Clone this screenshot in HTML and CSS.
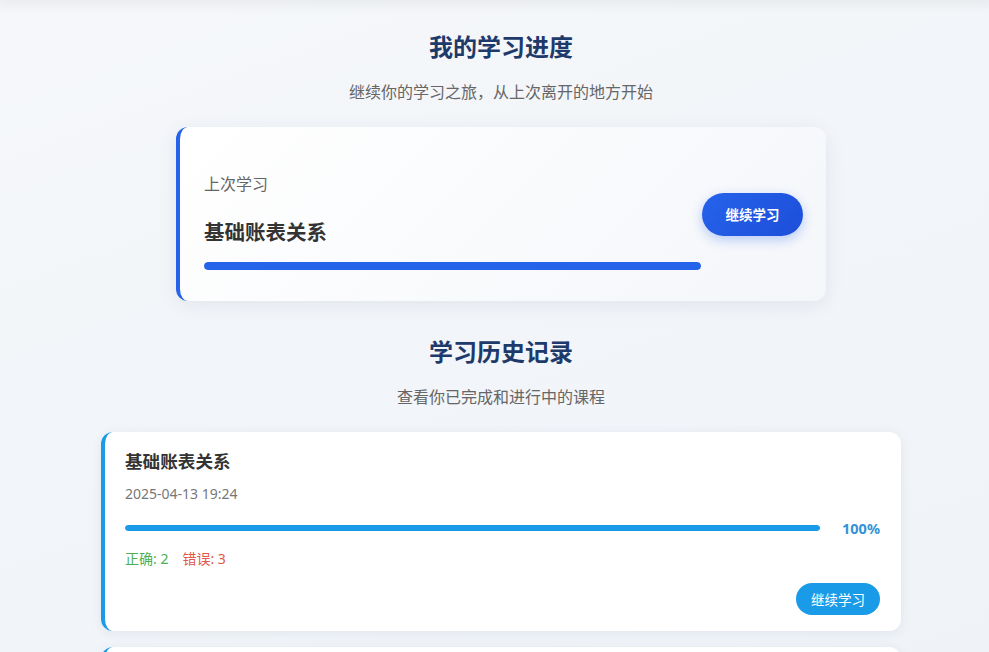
FILE: index.html
```html
<!DOCTYPE html>
<html lang="zh">
<head>
<meta charset="utf-8">
<title>我的学习进度</title>
<link rel="stylesheet" href="styles.css">
</head>
<body>
<div class="topbar"></div>
<main class="page">
  <section class="section">
    <h2 class="section-title">我的学习进度</h2>
    <p class="section-sub">继续你的学习之旅，从上次离开的地方开始</p>
    <div class="last-card">
      <div class="last-info">
        <div class="last-label">上次学习</div>
        <div class="last-title">基础账表关系</div>
        <div class="last-bar"><div class="last-fill" style="width:100%"></div></div>
      </div>
      <button class="btn-primary">继续学习</button>
    </div>
  </section>

  <section class="section history">
    <h2 class="section-title">学习历史记录</h2>
    <p class="section-sub">查看你已完成和进行中的课程</p>
    <div class="history-list">
      <div class="hist-card">
        <div class="hist-title">基础账表关系</div>
        <div class="hist-date">2025-04-13 19:24</div>
        <div class="hist-progress">
          <div class="hist-bar"><div class="hist-fill" style="width:100%"></div></div>
          <span class="hist-pct">100%</span>
        </div>
        <div class="hist-stats">
          <span class="ok">正确: 2</span>
          <span class="err">错误: 3</span>
        </div>
        <div class="hist-actions"><button class="btn-small">继续学习</button></div>
      </div>
      <div class="hist-card">
        <div class="hist-title">基础账表关系</div>
        <div class="hist-date">2025-04-12 10:05</div>
        <div class="hist-progress">
          <div class="hist-bar"><div class="hist-fill" style="width:60%"></div></div>
          <span class="hist-pct">60%</span>
        </div>
        <div class="hist-stats">
          <span class="ok">正确: 1</span>
          <span class="err">错误: 2</span>
        </div>
        <div class="hist-actions"><button class="btn-small">继续学习</button></div>
      </div>
    </div>
  </section>
</main>
</body>
</html>
```

FILE: styles.css
```css
* { box-sizing: border-box; }
html, body { margin: 0; padding: 0; }
body {
  font-family: "Noto Sans", "Noto Sans CJK SC", sans-serif;
  background: linear-gradient(160deg, #f5f7fa 0%, #eef2f7 100%);
  min-height: 100vh;
  color: #333;
}
.topbar {
  height: 0;
  box-shadow: 0 0 12px 4px rgba(0, 0, 0, 0.07);
}
.page {
  padding: 29px 0 0 13px;
  display: flex;
  flex-direction: column;
  align-items: center;
}
.section {
  width: 100%;
  display: flex;
  flex-direction: column;
  align-items: center;
}
.section-title {
  margin: 0;
  font-size: 24px;
  line-height: 36px;
  font-weight: 700;
  color: #1e3a6b;
}
.section-sub {
  margin: 16px 0 0;
  font-size: 16px;
  line-height: 22px;
  color: #666;
}
.last-card {
  margin-top: 24px;
  width: 650px;
  height: 174px;
  border-radius: 12px;
  border-left: 4px solid #2563eb;
  background: linear-gradient(135deg, #ffffff 0%, #f4f6fa 100%);
  box-shadow: 0 4px 20px rgba(30, 50, 90, 0.08);
  padding: 46px 23px 31px 24px;
  display: flex;
  align-items: center;
}
.last-info {
  flex: 1;
  margin-right: 1px;
}
.last-label {
  font-size: 16px;
  line-height: 22px;
  color: #666;
}
.last-title {
  margin-top: 22px;
  font-size: 20.5px;
  line-height: 30px;
  font-weight: 700;
  color: #333;
}
.last-bar {
  margin-top: 15px;
  height: 8px;
  border-radius: 4px;
  background: #e5eaf2;
  overflow: hidden;
}
.last-fill {
  height: 100%;
  border-radius: 4px;
  background: #2563eb;
}
.btn-primary {
  width: 101px;
  height: 43px;
  margin-top: -15px;
  border: none;
  border-radius: 22px;
  background: linear-gradient(135deg, #2563eb 0%, #1d4ed8 100%);
  color: #fff;
  font-family: inherit;
  font-size: 13.5px;
  font-weight: 700;
  box-shadow: 0 4px 12px rgba(37, 99, 235, 0.3);
}
.history { margin-top: 33px; }
.history-list {
  margin-top: 24px;
  width: 800px;
  display: flex;
  flex-direction: column;
  gap: 16px;
}
.hist-card {
  background: #fff;
  border-radius: 12px;
  border-left: 4px solid #1a9be8;
  box-shadow: 0 2px 12px rgba(30, 50, 90, 0.07);
  padding: 17px 21px 16px 20px;
}
.hist-title {
  font-size: 17.6px;
  line-height: 24px;
  font-weight: 700;
  color: #333;
}
.hist-date {
  margin-top: 11px;
  font-size: 14px;
  line-height: 20px;
  color: #777;
}
.hist-progress {
  margin-top: 14px;
  height: 20px;
  display: flex;
  align-items: center;
  gap: 22px;
}
.hist-bar {
  flex: 1;
  height: 6px;
  border-radius: 3px;
  background: #e8edf3;
  overflow: hidden;
}
.hist-fill {
  height: 100%;
  border-radius: 3px;
  background: #1a9be8;
}
.hist-pct {
  font-size: 14.5px;
  font-weight: 700;
  color: #3592d6;
}
.hist-stats {
  margin-top: 11px;
  font-size: 14px;
  line-height: 20px;
  display: flex;
  gap: 14px;
}
.ok { color: #4caf50; }
.err { color: #e0584a; }
.hist-actions {
  margin-top: 14px;
  display: flex;
  justify-content: flex-end;
}
.btn-small {
  height: 32px;
  padding: 0 15px;
  border: none;
  border-radius: 16px;
  background: #1a9be8;
  color: #fff;
  font-family: inherit;
  font-size: 13.5px;
}
```
